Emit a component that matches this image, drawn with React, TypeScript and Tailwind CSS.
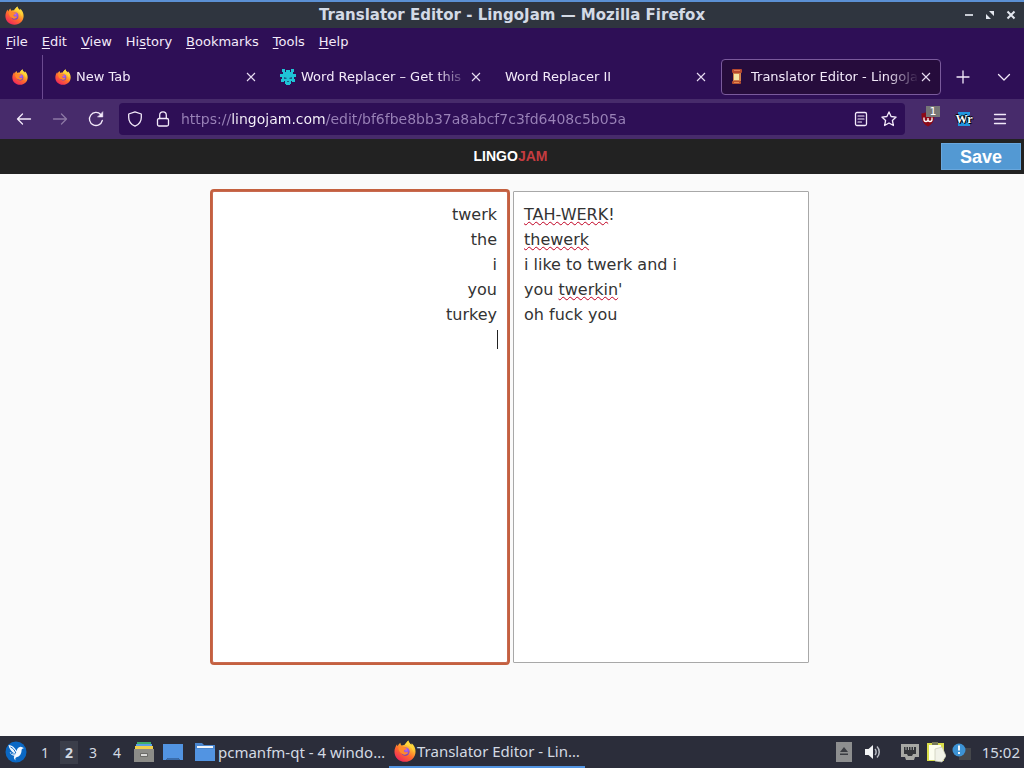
import React, { useId } from "react";

const dejavu = "font-['DejaVu_Sans',sans-serif]";

function FirefoxIcon({ className }: { className: string }) {
  const id = useId().replace(/[^a-zA-Z0-9]/g, "");
  return (
    <svg viewBox="0 0 24 24" className={className} aria-hidden="true">
      <defs>
        <linearGradient id={id + "a"} x1="0.85" y1="0.05" x2="0.25" y2="0.95">
          <stop offset="0" stopColor="#fff04a" />
          <stop offset="0.3" stopColor="#ffbd30" />
          <stop offset="0.6" stopColor="#ff6b2d" />
          <stop offset="1" stopColor="#f0295a" />
        </linearGradient>
        <radialGradient id={id + "b"} cx="0.6" cy="0.3" r="0.8">
          <stop offset="0" stopColor="#b968f0" />
          <stop offset="1" stopColor="#5a3bb8" />
        </radialGradient>
      </defs>
      <path
        fill={`url(#${id}a)`}
        d="M15.6 0.5c0.4 2 1.7 3.2 3.1 4.6 0.5-0.4 0.7-1 0.6-1.6 2.7 2.4 4.3 5.7 4.2 9.2C23.4 19 18.500 23.700 12 23.700S0.500 19 0.500 12.700C0.500 9.500 1.700 6.600 3.400 4.500c0 1 0.200 1.800 0.700 2.400 0.500-1.700 1.500-3 2.900-3.900-0.100 1.200 0.400 2.200 1.300 2.900 1-0.400 2.100-0.600 3.200-0.500 1-1.400 2.300-3.100 4.100-4.900z"
      />
      <circle cx="12.400" cy="12.600" r="4.600" fill={`url(#${id}b)`} />
      <path
        fill="#ff8a2b"
        d="M4.500 8.500c2-1.800 4.600-1.900 6.800-0.500 1.200 0.200 2.100 0.400 2.600 0.900-0.300 1.100-1.500 1.400-2.700 2-0.600 0.600-0.500 1.500 0.300 2.100 1.200 0.800 2.600 0 4 0.700-1 2-3.300 2.800-5.400 2C6.600 14.600 5 11.800 4.500 8.500z"
      />
      <path
        fill="#ffd83b"
        d="M15.600 0.500c0.400 2 1.700 3.200 3.100 4.600 1.900 2 3.100 4.700 2.500 8-0.600-2.900-2.400-5.400-5.300-6.800-1-0.500-2.300-0.900-4.400-0.900 1-1.400 2.300-3.100 4.100-4.900z"
      />
    </svg>
  );
}

function CloseIcon() {
  return (
    <svg viewBox="0 0 10 10" className="size-[10px]" fill="none" stroke="#e9ddf3" strokeWidth="1.1" aria-hidden="true">
      <path d="M1 1l8 8M9 1l-8 8" />
    </svg>
  );
}

function ReplacerIcon() {
  return (
    <svg viewBox="0 0 16 16" className="size-4 shrink-0" fill="#1fc3d6" aria-hidden="true">
      <path d="M2 0h3v3h1V1h4v2h1V0h3v3h-1v2h3v3h-2v2h1v3h-3v-1h-1v3h-1v1H6v-1H5v-3H4v1H1v-3h1V8H0V5h3V3H2z" />
      <path d="M4 8l3 1-1 1H4zM12 8L9 9l1 1h2zM7 12h2v1H7z" fill="#1b5b86" />
    </svg>
  );
}

function ScrollIcon() {
  return (
    <svg viewBox="0 0 16 16" className="size-4 shrink-0" aria-hidden="true">
      <rect x="2" y="0" width="10" height="4" rx="1" fill="#b5482f" />
      <rect x="4" y="1" width="6" height="1" fill="#e07c56" />
      <rect x="3" y="4" width="8" height="8" fill="#cf7f4a" />
      <rect x="4" y="5" width="5" height="6" fill="#f4e3a4" />
      <rect x="2" y="12" width="9" height="3" rx="1" fill="#b9502f" />
      <rect x="4" y="13" width="5" height="1" fill="#e58a50" />
    </svg>
  );
}

type TabProps = { title: string; icon?: React.ReactNode; active?: boolean };

function Tab({ title, icon, active }: TabProps) {
  return (
    <div
      className={
        "flex h-[36px] min-w-0 flex-1 items-center rounded border pl-2 pr-[9px] " +
        (active ? "border-[#7a5a9c] bg-[#260c3c]" : "border-transparent")
      }
    >
      {icon && <span className="mr-[5px] flex shrink-0">{icon}</span>}
      <button
        role="tab"
        aria-selected={!!active}
        className="min-w-0 flex-1 overflow-hidden whitespace-nowrap text-left [mask-image:linear-gradient(to_left,transparent,black_32px)]"
      >
        {title}
      </button>
      <button aria-label={"Close " + title} className="ml-[2px] flex shrink-0">
        <CloseIcon />
      </button>
    </div>
  );
}

const menus: [string, string, string][] = [
  ["", "F", "ile"],
  ["", "E", "dit"],
  ["", "V", "iew"],
  ["Hi", "s", "tory"],
  ["", "B", "ookmarks"],
  ["", "T", "ools"],
  ["", "H", "elp"],
];

function NavButton({ label, children }: { label: string; children: React.ReactNode }) {
  return (
    <button aria-label={label} className="flex h-8 w-9 shrink-0 items-center justify-center">
      {children}
    </button>
  );
}

const line = { fill: "none", stroke: "#f3eafa", strokeWidth: 1.3, strokeLinecap: "round", strokeLinejoin: "round" } as const;

function BrowserChrome() {
  return (
    <header className={"text-[13px] text-[#f3eafa] " + dejavu}>
      <div className="grid h-7 grid-cols-[1fr_auto_1fr] items-center border-t-2 border-[#5b90d4] bg-[#2f353f] px-[5px]">
        <FirefoxIcon className="size-[19px]" />
        <h1 className="text-[15px] font-bold text-[#d3dae6]">Translator Editor - LingoJam — Mozilla Firefox</h1>
        <div className="flex items-center justify-end gap-[11px] pr-[3px]">
          <button aria-label="Minimise">
            <svg viewBox="0 0 10 10" className="size-[10px]"><path d="M1 5h8" stroke="#e3e7ef" strokeWidth="1.700" /></svg>
          </button>
          <button aria-label="Restore">
            <svg viewBox="0 0 10 10" className="size-[10px]" fill="#e3e7ef"><path d="M4 1h5v5zM1 4v5h5z" /></svg>
          </button>
          <button aria-label="Close window">
            <svg viewBox="0 0 10 10" className="size-[10px]"><path d="M1.500 1.500l7 7M8.500 1.500l-7 7" stroke="#e3e7ef" strokeWidth="2" /></svg>
          </button>
        </div>
      </div>

      <div className="bg-[#2e0f56]">
        <nav aria-label="Menu" className="flex h-[27px] items-center gap-[14px] px-[6px]">
          {menus.map(([before, key, after]) => (
            <button key={before + key + after}>
              {before}
              <span className="underline underline-offset-2">{key}</span>
              {after}
            </button>
          ))}
        </nav>
        <div className="flex h-11 items-center">
          <button aria-label="Pinned tab" className="flex h-full w-[43px] shrink-0 items-center justify-center border-r border-[#6b4a90] pr-[2px]">
            <FirefoxIcon className="size-4" />
          </button>
          <div role="tablist" className="ml-[3px] flex min-w-0 flex-1 gap-[5px]">
            <Tab title="New Tab" icon={<FirefoxIcon className="size-4" />} />
            <Tab title="Word Replacer – Get this" icon={<ReplacerIcon />} />
            <Tab title="Word Replacer II" />
            <Tab title="Translator Editor - LingoJam" icon={<ScrollIcon />} active />
          </div>
          <button aria-label="New tab" className="flex w-[42px] shrink-0 justify-center pl-[2px]">
            <svg viewBox="0 0 14 14" className="size-[14px]" {...line}><path d="M7 1v12M1 7h12" /></svg>
          </button>
          <button aria-label="List all tabs" className="flex w-[41px] shrink-0 justify-center">
            <svg viewBox="0 0 14 14" className="size-[14px]" {...line}><path d="M1.500 4.500l5.500 5.500 5.500-5.500" /></svg>
          </button>
        </div>
      </div>

      <div className="flex h-10 items-center bg-[#472b6b] px-[6px]">
        <NavButton label="Back">
          <svg viewBox="0 0 16 16" className="size-4" {...line}><path d="M14.500 8H1.500M6.500 3L1.500 8l5 5" /></svg>
        </NavButton>
        <NavButton label="Forward">
          <svg viewBox="0 0 16 16" className="size-4 opacity-40" {...line}><path d="M1.500 8h13M9.500 3l5 5-5 5" /></svg>
        </NavButton>
        <NavButton label="Reload">
          <svg viewBox="0 0 16 16" className="size-4" {...line}>
            <path d="M14.300 9.500A6.500 6.500 0 1 1 12.800 3.600" />
            <path d="M14.800 1v5h-5z" fill="#f3eafa" strokeWidth="0.500" />
          </svg>
        </NavButton>
        <div className="ml-[5px] flex h-8 min-w-0 flex-1 items-center rounded bg-[#2e0f56] pl-2 pr-2">
          <svg viewBox="0 0 16 16" className="size-4 shrink-0" {...line}>
            <path d="M8 0.900L14.300 3v3.500c0 4-2.300 7-6.300 8.700C4 13.500 1.700 10.500 1.700 6.500V3z" />
          </svg>
          <svg viewBox="0 0 16 16" className="ml-3 size-4 shrink-0" {...line}>
            <rect x="2.500" y="7.500" width="11" height="7.500" rx="1.500" />
            <path d="M4.700 7.500V4.200a3.300 3.300 0 0 1 6.600 0v3.300" />
          </svg>
          <input
            aria-label="Address"
            type="text"
            defaultValue="https://lingojam.com/edit/bf6fbe8bb37a8abcf7c3fd6408c5b05a"
            spellCheck={false}
            className="ml-[10px] min-w-0 flex-1 bg-[linear-gradient(to_right,#9a83b8_50px,#fbf7fe_50px,#fbf7fe_145px,#9a83b8_145px)] bg-clip-text text-[14px] text-transparent outline-none"
          />
          <button aria-label="Reader view" className="mr-3 shrink-0">
            <svg viewBox="0 0 16 16" className="size-4" {...line}>
              <rect x="2.500" y="1.500" width="11" height="13" rx="1.500" />
              <path d="M5 5h6M5 8h6M5 11h3.500" strokeWidth="1.200" />
            </svg>
          </button>
          <button aria-label="Bookmark this page" className="shrink-0">
            <svg viewBox="0 0 16 16" className="size-4" {...line}>
              <path d="M8 0.900l2.100 4.600 5 0.600-3.700 3.400 1 5L8 12l-4.400 2.500 1-5L0.900 6.100l5-0.600z" />
            </svg>
          </button>
        </div>
        <div className="ml-[5px] flex">
          <NavButton label="Content blocker, 1 blocked">
            <span className="relative flex">
              <svg viewBox="0 0 16 16" className="size-4">
                <path d="M8 0.500c2 1.200 4.300 1.700 6.500 1.800 0.300 6.500-1.700 10.700-6.500 13.200C3.200 13 1.200 8.800 1.500 2.300 3.700 2.200 6 1.700 8 0.500z" fill="#8c0a18" />
                <path d="M4 6.500v2a2 2 0 0 0 4 0v-1.500 1.500a2 2 0 0 0 4 0v-2" fill="none" stroke="#fff" strokeWidth="1.300" />
              </svg>
              <span className="absolute -right-1 -top-[5px] flex h-[11px] w-[14px] items-center justify-center bg-[#777] text-[11px] leading-none text-white">1</span>
            </span>
          </NavButton>
          <NavButton label="Word Replacer">
            <span className="relative flex size-4 items-center justify-center">
              <svg viewBox="0 0 16 16" className="size-4">
                <path d="M2 1h12v3h-1v8h1v3H2v-3h1V4H2z" fill="#2196e0" />
                <path d="M7 4h2v8H7z" fill="#0b3a66" />
              </svg>
              <span className="absolute font-['Liberation_Serif',serif] text-[12px] font-bold leading-none text-white [text-shadow:1px_1px_0_#000,-1px_0_0_#000,0_-1px_0_#000]">Wr</span>
            </span>
          </NavButton>
          <NavButton label="Application menu">
            <svg viewBox="0 0 14 14" className="size-[14px]" {...line}><path d="M1.500 2.500h11M1.500 7h11M1.500 11.500h11" /></svg>
          </NavButton>
        </div>
      </div>
    </header>
  );
}

const sources = ["twerk", "the", "i", "you", "turkey"];
const targets = ["TAH-WERK!", "thewerk", "i like to twerk and i", "you twerkin'", "oh fuck you"];

function Misspelt({ children }: { children: string }) {
  return (
    <span className="underline decoration-[#c00020] decoration-wavy decoration-[1px] underline-offset-1 [text-decoration-skip-ink:none]">
      {children}
    </span>
  );
}

function Editor() {
  const box = "block h-[472px] w-full resize-none border bg-white p-[10px] outline-none";
  const marks = "pointer-events-none absolute inset-0 whitespace-pre-line border border-transparent p-[10px] text-transparent";
  return (
    <main className="flex flex-1 flex-col bg-[#fafafa]">
      <div className="grid h-[35px] shrink-0 grid-cols-[1fr_auto_1fr] items-center bg-[#222] pr-[3px]">
        <a href="#home" className="col-start-2 font-['Liberation_Sans',sans-serif] text-[14px] font-bold text-white">
          LINGO<span className="text-[#c43c40]">JAM</span>
        </a>
        <button className="h-[27px] w-20 justify-self-end border border-[#69a7dc] bg-[#5399d3] font-['Liberation_Sans',sans-serif] text-[18px] font-bold leading-none text-white">
          Save
        </button>
      </div>
      <div className={"mx-auto grid w-full max-w-[600px] grid-cols-2 gap-[5px] pr-[3px] pt-[17px] text-[16px] leading-[25px] text-[#333] " + dejavu}>
        <div className="relative">
          <textarea
            aria-label="Words to replace"
            spellCheck={false}
            defaultValue={sources.join("\n") + "\n"}
            className={box + " rounded-[2px] border-[#c86a50] text-right ring-2 ring-[#c4603f]"}
          />
          <div aria-hidden="true" className={marks + " flex flex-col items-end"}>
            <span className="mt-[128px] h-[19px] w-px translate-x-px bg-[#222]" />
          </div>
        </div>
        <div className="relative">
          <textarea
            aria-label="Replacements"
            spellCheck={false}
            defaultValue={targets.join("\n")}
            className={box + " rounded-[1px] border-[#a8a8a8]"}
          />
          <div aria-hidden="true" className={marks}>
            <Misspelt>TAH-WERK</Misspelt>!{"\n"}
            <Misspelt>thewerk</Misspelt>
            {"\n\nyou "}
            <Misspelt>twerkin</Misspelt>
          </div>
        </div>
      </div>
    </main>
  );
}

function Taskbar() {
  return (
    <footer className="flex h-8 shrink-0 items-center bg-[#2b2d3a] font-['Noto_Sans',sans-serif] text-[15px] text-[#d3dae3]">
      <button aria-label="Applications" className="ml-[5px] flex shrink-0">
        <svg viewBox="0 0 22 22" className="size-[22px]">
          <circle cx="11" cy="11" r="10.500" fill="#0b68c4" />
          <path d="M3.500 4c3.500 0.300 6.500 2.600 8 6 0.700-2.400 2-4 4-4.200 1.200-0.100 1.800 0.700 4 1.500-1.800 0-2.800 0.500-2.900 1.800-0.200 3.800-1.700 6.600-4.600 7-1.600 0.300-1.900 1.400-1.500 3.300-1.700-1.300-2.200-3.300-1-4.600C7.300 14.600 5.500 13.300 4.600 11c1.600 0.900 3 1.200 4.200 1C6 10 4 7.500 3.500 4z" fill="#f4f9ff" />
          <path d="M5.500 6c2.500 1.200 4.200 3.200 5.300 6M6 12.200c2 0.900 3.500 0.900 4.600 0.500" stroke="#0b68c4" strokeWidth="1" fill="none" />
        </svg>
      </button>
      <div className="ml-[6px] flex shrink-0 text-center text-[14px]">
        <button className="w-6">1</button>
        <button className="w-6 font-bold"><span className="mx-[3px] block bg-[#3b3e4a] py-px">2</span></button>
        <button className="w-6">3</button>
        <button className="w-6">4</button>
      </div>
      <button aria-label="File manager" className="ml-1 shrink-0">
        <svg viewBox="0 0 22 22" className="size-[22px]">
          <path d="M4 1h14v3H4z" fill="#3fae6b" />
          <path d="M3 3h16v3H3z" fill="#5aa0e6" />
          <path d="M2 5h18v4H2z" fill="#f0cf4c" />
          <path d="M1 8h20v13H1z" fill="#8c8c88" />
          <rect x="7" y="12" width="8" height="4" rx="1" fill="#6b6b68" />
          <path d="M8 14h6" stroke="#fff" strokeWidth="1.500" />
        </svg>
      </button>
      <button aria-label="Show desktop" className="ml-[7px] shrink-0">
        <svg viewBox="0 0 22 22" className="size-[22px]">
          <path d="M1 3h20v16h-3l-2-2H6l-2 2H1z" fill="#5294e2" />
          <path d="M6 17h10l2 2H4z" fill="#3a6cab" />
        </svg>
      </button>
      <button className="ml-2 flex h-full w-[196px] shrink-0 items-center whitespace-nowrap pl-[2px]">
        <svg viewBox="0 0 22 22" className="size-[22px] shrink-0">
          <path d="M1 2h7l2 2h11v16H1z" fill="#4a86cf" />
          <path d="M3 5h16v2H3z" fill="#f2f6fb" />
          <path d="M1 8h20v12H1z" fill="#5294e2" />
        </svg>
        <span className="pl-[2px]">pcmanfm-qt - 4 windo…</span>
      </button>
      <button className="ml-px flex h-full w-[196px] shrink-0 items-center whitespace-nowrap border-b-2 border-[#5294e2] pl-[5px]">
        <FirefoxIcon className="size-[22px] shrink-0" />
        <span className="pl-px">Translator Editor - Lin…</span>
      </button>
      <div className="ml-auto flex shrink-0 items-center pr-1">
        <button aria-label="Removable media" className="mr-3">
          <svg viewBox="0 0 16 20" className="h-5 w-4">
            <path d="M0 0h16v20H0z" fill="#8d8e8f" />
            <path d="M4 10l4-5 4 5zM4 11.500h8v1.500H4z" fill="#3a3c42" />
          </svg>
        </button>
        <button aria-label="Volume" className="mr-[18px]">
          <svg viewBox="0 0 18 18" className="size-[18px]">
            <path d="M1 6h3.500L9 2v14l-4.500-4H1z" fill="#f3f4f6" />
            <path d="M11 6c1.500 1.500 1.500 4.500 0 6M13 3.500c3 3 3 8 0 11" stroke="#b9bcc4" strokeWidth="1.500" fill="none" />
          </svg>
        </button>
        <button aria-label="Network" className="mr-[6px]">
          <svg viewBox="0 0 20 18" className="h-[18px] w-5">
            <path d="M1 1h18v13h-4l-1 3H6l-1-3H1z" fill="#a7a8a4" />
            <path d="M4 4h12v7h-3l-1 2H8l-1-2H4z" fill="#33353a" />
            <path d="M6 4v3M8.500 4v3M11 4v3M13.500 4v3" stroke="#a7a8a4" strokeWidth="1" />
          </svg>
        </button>
        <button aria-label="Clipboard" className="mr-[6px]">
          <svg viewBox="0 0 20 22" className="h-[22px] w-5">
            <path d="M1 2h17v18H1z" fill="#d9dd4a" />
            <path d="M3 4h12v15H3z" fill="#fcfdf0" />
            <path d="M6 1h6v3H6z" fill="#77795a" />
            <path d="M9 8l7-2 4 9-4 6-7-1z" fill="#f1f2e8" stroke="#c7c9b4" strokeWidth="0.700" />
          </svg>
        </button>
        <button aria-label="Updates available" className="mr-[10px]">
          <svg viewBox="0 0 20 18" className="h-[18px] w-5">
            <path d="M7 5h12v12H7z" fill="#45474b" />
            <circle cx="7" cy="7" r="6.500" fill="#3c92d4" />
            <path d="M7 2.500v5M7 9v2" stroke="#fff" strokeWidth="1.800" />
          </svg>
        </button>
        <time>15:02</time>
      </div>
    </footer>
  );
}

export default function App() {
  return (
    <div className="flex min-h-screen flex-col">
      <BrowserChrome />
      <Editor />
      <Taskbar />
    </div>
  );
}
